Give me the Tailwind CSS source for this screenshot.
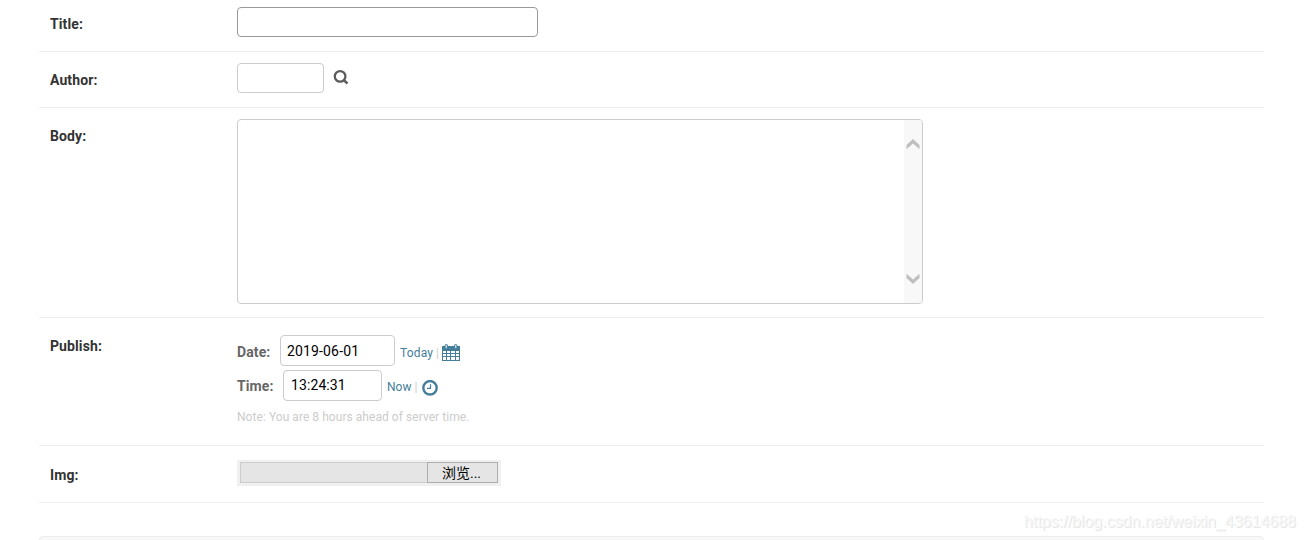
<!DOCTYPE html>
<html lang="en">

<head>
  <meta charset="UTF-8" />
  <meta name="viewport" content="width=device-width, initial-scale=1.0" />
  <title>Add article</title>
  <script src="https://cdn.jsdelivr.net/npm/@tailwindcss/browser@4"></script>
</head>

<body class="bg-white font-['Roboto','Noto_Sans_CJK_SC',sans-serif] text-sm text-[#333] h-[540px] overflow-hidden relative">

  <form class="ml-[39px] w-[1225px]">
    <!-- Title -->
    <div class="flex h-[52px] border-b border-[#eee] pl-[11px] pt-[7px]">
      <label for="title" class="w-[187px] pt-[7px] font-bold leading-5 tracking-[0.1px]">Title:</label>
      <input id="title" type="text" class="w-[301px] h-[30px] border border-[#999] rounded-[4px] px-1.5 outline-none" />
    </div>

    <!-- Author -->
    <div class="flex h-14 border-b border-[#eee] pl-[11px] pt-[11px]">
      <label for="author" class="w-[187px] pt-[7px] font-bold leading-5 tracking-[0.1px]">Author:</label>
      <input id="author" type="text" class="w-[87px] h-[30px] border border-[#ccc] rounded-[4px] px-1.5 outline-none" />
      <svg class="ml-[9px] mt-[6px] w-4 h-4" viewBox="0 0 16 16" fill="none" stroke="#5c5c5c">
        <circle cx="7.1" cy="7.4" r="5.3" stroke-width="2.3" />
        <path d="M10.2 10.6l4.3 3.9" stroke-width="2.5" />
      </svg>
    </div>

    <!-- Body -->
    <div class="flex h-[210px] border-b border-[#eee] pl-[11px] pt-[11px]">
      <label class="w-[187px] pt-[7px] font-bold leading-5 tracking-[0.1px]">Body:</label>
      <div class="flex justify-end w-[686px] h-[185px] border border-[#ccc] rounded-[4px] overflow-hidden">
        <div class="flex flex-col justify-between items-center w-[18px] bg-[#f8f8f8] pt-[18px] pb-[18px] pr-px">
          <svg class="w-[14px] h-3" viewBox="0 0 14 12" fill="#bfbfbf">
            <path d="M7 .9l6.5 6.1v4.3L7 5.4.5 11.3V7z" />
          </svg>
          <svg class="w-[14px] h-3" viewBox="0 0 14 12" fill="#bfbfbf">
            <path d="M7 11.1L.5 5V.7L7 6.6 13.5.7V5z" />
          </svg>
        </div>
      </div>
    </div>

    <!-- Publish -->
    <div class="flex h-32 border-b border-[#eee] pl-[11px] pt-[17px]">
      <label class="w-[187px] pt-px font-bold leading-5 tracking-[0.1px]">Publish:</label>
      <div>
        <div class="flex h-[35px]">
          <span class="w-[43px] pt-[7px] font-bold leading-5 tracking-[0.1px] text-[#666]">Date:</span>
          <input type="text" value="2019-06-01" class="w-[115px] h-[31px] border border-[#ccc] rounded-[4px] px-1.5 tracking-[0.15px] text-black outline-none" />
          <a class="ml-[5px] w-[33px] pt-[9px] text-xs leading-[18px] tracking-[0.15px] text-[#447e9b]">Today</a>
          <span class="ml-[3px] w-[3px] pt-[9px] text-xs leading-[18px] text-[#ccc]">|</span>
          <svg class="ml-[3px] mt-[8px] w-[18px] h-[19px]" viewBox="0 0 18 19">
            <path d="M0 3h18v15H0z" fill="#447e9b" />
            <g fill="#fff">
              <path d="M1 8h3v2H1zM5 8h3v2H5zM9 8h4v2H9zM14 8h3v2h-3z" />
              <path d="M1 11h3v2H1zM5 11h3v2H5zM9 11h4v2H9zM14 11h3v2h-3z" />
              <path d="M1 14h3v3H1zM5 14h3v3H5zM9 14h4v3H9zM14 14h3v3h-3z" />
            </g>
            <g fill="#c5d8e1" stroke="#447e9b">
              <rect x="3" y="1.5" width="2.6" height="4" rx="1.3" />
              <rect x="12.4" y="1.5" width="2.6" height="4" rx="1.3" />
            </g>
          </svg>
        </div>
        <div class="flex h-[35px]">
          <span class="w-[46px] pt-[6px] font-bold leading-5 tracking-[0.1px] text-[#666]">Time:</span>
          <input type="text" value="13:24:31" class="w-[99px] h-[31px] border border-[#ccc] rounded-[4px] px-[7px] pb-0.5 tracking-[0.1px] text-black outline-none" />
          <a class="ml-[5px] pt-2 text-xs leading-[18px] text-[#447e9b]">Now</a>
          <span class="ml-[3px] pt-2 text-xs leading-[18px] text-[#ccc]">|</span>
          <svg class="ml-[5px] mt-[10px] w-4 h-4" viewBox="0 0 16 16" fill="none" stroke="#447e9b">
            <circle cx="8" cy="7.8" r="6.7" stroke-width="2.4" />
            <path d="M8.5 4.3v4H5" stroke-width="1.2" />
          </svg>
        </div>
        <p class="pt-[3px] text-xs leading-[18px] tracking-[0.05px] text-[#ccc]">Note: You are 8 hours ahead of server time.</p>
      </div>
    </div>

    <!-- Img -->
    <div class="flex h-[57px] border-b border-[#eee] pl-[11px] pt-[14px]">
      <label class="w-[187px] pt-[5px] font-bold leading-5 tracking-[0.1px]">Img:</label>
      <div class="flex w-[264px] h-[26px] bg-[#f0f0f0] pl-[3px] pt-[2px]">
        <div class="w-[187px] h-[21px] bg-[#e5e5e5] border border-r-0 border-[#ccc]"></div>
        <button type="button" class="w-[71px] h-[21px] bg-[#e5e5e5] border border-[#adadad] pt-px pr-[2px] text-sm leading-[19px] text-black">浏览...</button>
      </div>
    </div>

    <!-- Submit row -->
    <div class="mt-[33px] h-1 bg-[#f8f8f8] border border-b-0 border-[#eee] rounded-t-[4px]"></div>
  </form>

  <div class="absolute right-[9px] top-[512px] font-['Liberation_Sans',sans-serif] text-base leading-5 text-[#f8f8f8] [text-shadow:1px_1px_0_#e6e6e6]">https://blog.csdn.net/weixin_43614688</div>

</body>

</html>
